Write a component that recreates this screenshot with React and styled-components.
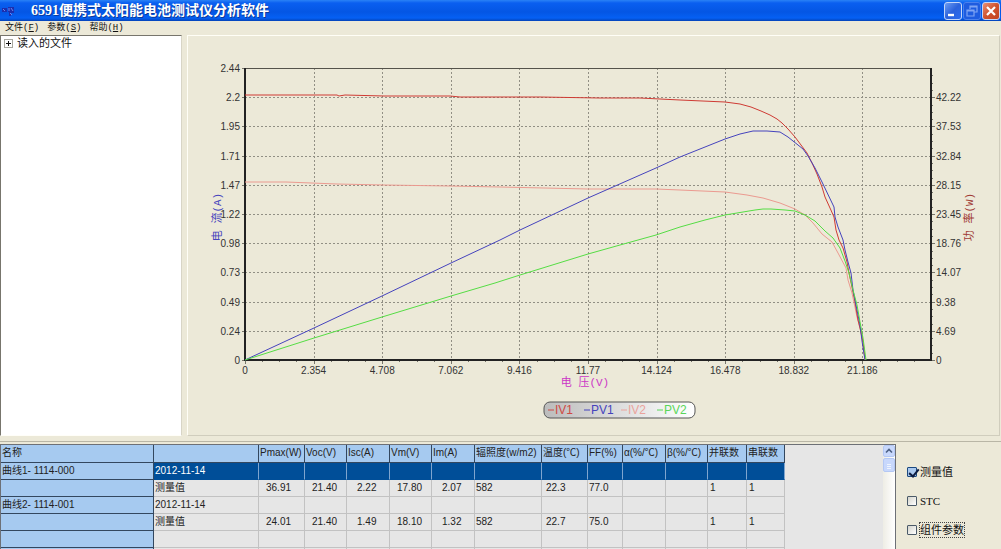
import React from "react";
import styled, { createGlobalStyle } from "styled-components";

const sans = '"Liberation Sans", "Noto Sans CJK SC", sans-serif';
const mono = '"Liberation Mono", "Noto Sans CJK SC", monospace';
const serif = '"Liberation Serif", "Noto Sans CJK SC", serif';

const GlobalStyle = createGlobalStyle`
  * { box-sizing: border-box; }
  body { margin: 0; background: #ece9d8; font-family: ${sans}; color: #222; overflow: hidden; }
  button { font: inherit; color: inherit; border: 0; background: none; padding: 0; }
`;

const Window = styled.div`
  display: flex;
  flex-direction: column;
  height: 100vh;
`;

const TitleBar = styled.header`
  display: flex;
  align-items: center;
  flex: none;
  height: 21px;
  padding: 0 1px 0 2px;
  background: linear-gradient(#2a82f6 0, #0a5ff0 3px, #0456e4 12px, #0560f4 18px, #0443b8 21px);
`;

const Title = styled.h1`
  flex: 1;
  margin: 0 0 0 16px;
  font: 700 14px/20px ${serif};
  color: #fff;
  text-shadow: 1px 1px 0 #0a3a9c;
  white-space: nowrap;
`;

const WindowButtons = styled.div`
  display: flex;
  gap: 1px;
`;

const WindowButton = styled.button`
  display: flex;
  width: 18px;
  height: 18px;
  border: 1px solid ${(p) => (p.$dim ? "#4a80ec" : "#c4d6f8")};
  border-radius: 3px;
  background: ${(p) =>
    p.$close
      ? "linear-gradient(135deg, #e89078, #d0532e 50%, #c2431f)"
      : p.$dim
      ? "#1e5ce0"
      : "linear-gradient(135deg, #6d9cf2, #2b62dc 50%, #2a6bf0)"};
  svg { width: 16px; height: 16px; }
`;

const MenuBar = styled.nav`
  display: flex;
  flex: none;
  gap: 8px;
  height: 14px;
  padding-left: 5px;
`;

const MenuItem = styled.button`
  font: 9px/13px ${mono};
  color: #111;
  white-space: nowrap;
`;

const Workspace = styled.main`
  display: flex;
  flex: none;
  gap: 5px;
  padding: 0 1px 5px 0;
  border-bottom: 1px solid #b9b6a6;
`;

const TreePanel = styled.aside`
  flex: none;
  width: 182px;
  border: 1px solid #fffef8;
  border-top-color: #77756c;
  border-left-color: #77756c;
  background: #fff;
  border-right-color: #d8d5c6;
`;

const TreeItem = styled.button`
  display: flex;
  align-items: center;
  gap: 4px;
  height: 14px;
  padding-left: 3px;
  font-size: 11px;
  line-height: 13px;
  color: #111;
  svg { width: 9px; height: 9px; }
`;

const ChartPanel = styled.section`
  flex: 1;
  min-width: 0;
  border: 1px solid #d0cdbd;
  border-top-color: #fffef6;
  border-left-color: #fffef6;
  svg { display: block; width: 100%; height: auto; }
`;

const TickText = styled.text`
  font: 10px ${sans};
  fill: #333;
  text-anchor: ${(p) => p.$anchor};
`;

const AxisTitle = styled.text`
  font: 11px ${mono};
  fill: ${(p) => p.$color};
  text-anchor: middle;
`;

const LegendText = styled.text`
  font: 12px ${sans};
  fill: ${(p) => p.$color};
`;

const Results = styled.section`
  display: flex;
  flex: 1;
  min-height: 0;
  padding-top: 2px;
`;

const GridArea = styled.div`
  display: flex;
  flex: 1;
  min-width: 0;
  overflow: hidden;
  border: 1px solid #6d7076;
  border-width: 1px 1px 0 1px;
  background: #e6e6e6;
`;

const GridScroll = styled.div`
  flex: 1;
  min-width: 0;
  overflow: hidden;
`;

const DataTable = styled.table`
  table-layout: fixed;
  width: 784px;
  border-collapse: separate;
  border-spacing: 0;
  font-size: 10px;
  line-height: 14px;
  white-space: nowrap;
  color: #222;
`;

const HeadCell = styled.th`
  height: 18px;
  padding: 0 0 2px 1px;
  overflow: hidden;
  border-right: 1px solid #33475f;
  border-bottom: 1px solid #33475f;
  background: #a6caf0;
  font-weight: 400;
  text-align: left;
`;

const NameCell = styled(HeadCell)`
  height: 17px;
  padding: 0 0 1px 1px;
`;

const Cell = styled.td`
  height: 17px;
  padding: 0 0 1px ${(p) => p.$indent || 1}px;
  border-right: 1px solid ${(p) => (p.$active ? "#7fa5cf" : "#c2c2c2")};
  border-bottom: 1px solid ${(p) => (p.$active ? "#004e98" : "#c2c2c2")};
  background: ${(p) => (p.$active ? "#004e98" : "#e6e6e6")};
  color: ${(p) => (p.$active ? "#fff" : "#222")};
`;

const ScrollBar = styled.div`
  display: flex;
  flex-direction: column;
  gap: 1px;
  flex: none;
  width: 12px;
  background: linear-gradient(90deg, #eeede5, #fff);
`;

const ScrollButton = styled.button`
  display: block;
  width: 12px;
  height: ${(p) => p.$size}px;
  border: 1px solid #b4c8f4;
  border-radius: 2px;
  background: #c8d8fc;
  svg { display: block; width: 10px; height: 10px; }
`;

const Options = styled.form`
  display: flex;
  flex-direction: column;
  align-items: flex-start;
  gap: 13px;
  flex: none;
  width: 105px;
  padding: 20px 0 0 11px;
`;

const Option = styled.label`
  display: flex;
  align-items: center;
  gap: 3px;
  height: 16px;
  font: 11px/14px ${serif};
  color: #111;
`;

const OptionText = styled.span`
  outline: ${(p) => (p.$focused ? "1px dotted #444" : "none")};
`;

const CheckBox = styled.input`
  position: relative;
  appearance: none;
  width: 10px;
  height: 10px;
  margin: 0;
  border: 1px solid #4b5a68;
  border-radius: 1px;
  background: linear-gradient(135deg, #d4d4cc, #fff);
  &:checked { background: #a9c8ee; border-color: #1c4a80; }
  &:checked::after {
    content: "";
    position: absolute;
    left: 3px;
    top: -1px;
    width: 4px;
    height: 8px;
    border: solid #0c1c40;
    border-width: 0 2px 2px 0;
    transform: rotate(40deg);
  }
`;

// Plot area, in chart units; the origin is its top left corner.
const PLOT_W = 686;
const PLOT_H = 292;
const currentTicks = ["2.44", "2.2", "1.95", "1.71", "1.47", "1.22", "0.98", "0.73", "0.49", "0.24", "0"];
const powerTicks = ["", "42.22", "37.53", "32.84", "28.15", "23.45", "18.76", "14.07", "9.38", "4.69", "0"];
const voltageTicks = ["0", "2.354", "4.708", "7.062", "9.416", "11.77", "14.124", "16.478", "18.832", "21.186"];

const curves = [
  { name: "IV2", color: "#eb9a90", points: "0,114 41,114 92,116 139,117 205,118 255,119 343,121 411,121 435,122 480,124 502,127 518,130 535,135 550,141 560,147 568,155 577,166 587,174 593,185 601,200 603,212 607,225 612,249 615,260 618,273 620,292" },
  { name: "IV1", color: "#cf3b34", points: "0,27 92,27 94,28 100,27 139,28 205,28 215,29 295,29 355,30 395,30 415,31 435,32 480,34 495,36 506,39 516,43 525,47 532,51 537,55 543,61 550,69 556,77 562,85 567,95 572,106 577,119 580,129 585,140 589,149 591,162 594,172 598,180 602,194 604,205 608,224 610,234 613,252 615,260 618,274 620,292" },
  { name: "PV1", color: "#4543bd", points: "0,292 69,260 137,228 206,195 255,172 275,162 343,130 411,100 435,89 460,79 480,71 495,66 508,63 522,63 535,64 543,69 553,77 558,81 563,88 570,100 577,114 589,139 590,149 593,159 598,172 600,182 603,194 606,205 608,222 611,237 615,257 617,273 620,292" },
  { name: "PV2", color: "#55dd44", points: "0,292 69,270 137,249 206,228 250,215 275,207 343,186 375,177 411,167 435,159 460,152 480,147 510,142 518,141 526,141 540,142 550,143 560,147 570,153 580,163 588,170 595,180 600,193 604,205 608,222 612,237 615,254 618,270 621,292" },
];

const legend = [
  { name: "IV1", color: "#cf4a44", x: 303 },
  { name: "PV1", color: "#4543bd", x: 339 },
  { name: "IV2", color: "#eba39c", x: 376 },
  { name: "PV2", color: "#5ad65a", x: 412 },
];

function Chart() {
  const row = (i) => (i * PLOT_H) / 10;
  const col = (i) => (i * PLOT_W) / 10;
  return (
    <svg viewBox="-57 -32 811 399" role="img" aria-label="IV / PV">
      <defs>
        <linearGradient id="legendFill">
          <stop offset="0" stopColor="#bcbcbc" />
          <stop offset="1" stopColor="#fff" />
        </linearGradient>
      </defs>
      <g stroke="#918f84" strokeDasharray="2 2">
        {currentTicks.slice(1, 10).map((t, i) => (
          <line key={t} x1="0" x2={PLOT_W} y1={Math.round(row(i + 1)) + 0.5} y2={Math.round(row(i + 1)) + 0.5} />
        ))}
        {voltageTicks.slice(1).map((t, i) => (
          <line key={t} y1="0" y2={PLOT_H} x1={Math.round(col(i + 1)) + 0.5} x2={Math.round(col(i + 1)) + 0.5} />
        ))}
      </g>
      <g stroke="#77756a">
        {Array.from({ length: 40 }, (_, i) => (
          <line key={i} x1={Math.round(col(i / 4)) + 0.5} x2={Math.round(col(i / 4)) + 0.5} y1={PLOT_H} y2={PLOT_H + (i % 4 ? 2 : 4)} />
        ))}
        {Array.from({ length: 40 }, (_, i) => (
          <line key={i} y1={Math.round(row((i + 1) / 4)) + 0.5} y2={Math.round(row((i + 1) / 4)) + 0.5} x1={PLOT_W} x2={PLOT_W + ((i + 1) % 4 ? 2 : 4)} />
        ))}
        {currentTicks.map((t, i) => (
          <line key={t} x1="-3" x2="0" y1={Math.round(row(i)) + 0.5} y2={Math.round(row(i)) + 0.5} />
        ))}
      </g>
      <line x1="0" x2={PLOT_W} y1="0.5" y2="0.5" stroke="#55534b" />
      <path d={`M0 0V${PLOT_H}H${PLOT_W}V0`} fill="none" stroke="#222" strokeWidth="2" />
      {curves.map((c) => (
        <polyline key={c.name} points={c.points} fill="none" stroke={c.color} strokeWidth="1" />
      ))}
      {currentTicks.map((t, i) => (
        <TickText key={t} $anchor="end" x="-5" y={row(i) + 4}>{t}</TickText>
      ))}
      {powerTicks.map((t, i) => (
        <TickText key={i} $anchor="start" x={PLOT_W + 5} y={row(i) + 4}>{t}</TickText>
      ))}
      {voltageTicks.map((t, i) => (
        <TickText key={t} $anchor="middle" x={col(i)} y={PLOT_H + 14}>{t}</TickText>
      ))}
      <AxisTitle $color="#cb35c6" x="340" y="318">电 压(V)</AxisTitle>
      <AxisTitle $color="#4543bd" transform="translate(-24 149) rotate(-90)">电 流(A)</AxisTitle>
      <AxisTitle $color="#a03a34" transform={`translate(${PLOT_W + 42} 149) rotate(-90)`}>功 率(W)</AxisTitle>
      <rect x="299" y="334" width="151" height="16" rx="6" fill="url(#legendFill)" stroke="#555" />
      {legend.map((l) => (
        <g key={l.name}>
          <line x1={l.x} x2={l.x + 6} y1="342" y2="342" stroke={l.color} />
          <LegendText $color={l.color} x={l.x + 7} y="346">{l.name}</LegendText>
        </g>
      ))}
    </svg>
  );
}

const columns = [
  { title: "名称", width: 153 },
  { title: "", width: 105 },
  { title: "Pmax(W)", width: 46, indent: 7 },
  { title: "Voc(V)", width: 42, indent: 7 },
  { title: "Isc(A)", width: 43, indent: 10 },
  { title: "Vm(V)", width: 42, indent: 7 },
  { title: "Im(A)", width: 43, indent: 10 },
  { title: "辐照度(w/m2)", width: 67 },
  { title: "温度(℃)", width: 46, indent: 4 },
  { title: "FF(%)", width: 35 },
  { title: "α(%/℃)", width: 43 },
  { title: "β(%/℃)", width: 42 },
  { title: "并联数", width: 39, indent: 2 },
  { title: "串联数", width: 38, indent: 2 },
];

const blank = Array(12).fill("");
const rows = [
  { name: "曲线1- 1114-000", active: true, cells: ["2012-11-14", ...blank] },
  { name: "", cells: ["测量值", "36.91", "21.40", "2.22", "17.80", "2.07", "582", "22.3", "77.0", "", "", "1", "1"] },
  { name: "曲线2- 1114-001", cells: ["2012-11-14", ...blank] },
  { name: "", cells: ["测量值", "24.01", "21.40", "1.49", "18.10", "1.32", "582", "22.7", "75.0", "", "", "1", "1"] },
  { name: "", cells: ["", ...blank] },
  { name: "", cells: ["", ...blank] },
];

function ResultTable() {
  return (
    <DataTable>
      <colgroup>
        {columns.map((c, i) => <col key={i} width={c.width} />)}
      </colgroup>
      <thead>
        <tr>{columns.map((c, i) => <HeadCell key={i} scope="col">{c.title}</HeadCell>)}</tr>
      </thead>
      <tbody>
        {rows.map((r, i) => (
          <tr key={i}>
            <NameCell scope="row">{r.name}</NameCell>
            {r.cells.map((v, j) => (
              <Cell key={j} $active={r.active} $indent={columns[j + 1].indent}>{v}</Cell>
            ))}
          </tr>
        ))}
      </tbody>
    </DataTable>
  );
}

export default function App() {
  return (
    <Window>
      <GlobalStyle />
      <TitleBar>
        <svg width="13" height="16" viewBox="0 0 13 16" aria-hidden="true">
          <path d="M0 5h5v4H0zM6 4h6v6H9v3H7V9H6z" fill="#1c2fae" />
          <path d="M1 6l2 2M7 5v3M9 5l2 3M8 10l2 2" stroke="#6c86ee" fill="none" />
        </svg>
        <Title>6591便携式太阳能电池测试仪分析软件</Title>
        <WindowButtons>
          <WindowButton aria-label="最小化">
            <svg viewBox="0 0 16 16"><path d="M3 12h6" stroke="#fff" strokeWidth="2.4" /></svg>
          </WindowButton>
          <WindowButton $dim aria-label="还原">
            <svg viewBox="0 0 16 16" fill="none" stroke="#7ea4f4" strokeWidth="1.2">
              <path d="M6 6V3h7v6h-3M6 4h7M3 7h7v6H3zM3 8h7" />
            </svg>
          </WindowButton>
          <WindowButton $close aria-label="关闭">
            <svg viewBox="0 0 16 16"><path d="M4 4l8 8M12 4l-8 8" stroke="#fff" strokeWidth="2.2" /></svg>
          </WindowButton>
        </WindowButtons>
      </TitleBar>
      <MenuBar>
        <MenuItem>文件(<u>F</u>)</MenuItem>
        <MenuItem>参数(<u>S</u>)</MenuItem>
        <MenuItem>帮助(<u>H</u>)</MenuItem>
      </MenuBar>
      <Workspace>
        <TreePanel>
          <TreeItem aria-expanded="false">
            <svg viewBox="0 0 9 9" fill="none">
              <rect x="0.5" y="0.5" width="8" height="8" stroke="#a8a8a0" />
              <path d="M2 4.5h5M4.5 2v5" stroke="#111" />
            </svg>
            读入的文件
          </TreeItem>
        </TreePanel>
        <ChartPanel>
          <Chart />
        </ChartPanel>
      </Workspace>
      <Results>
        <GridArea>
          <GridScroll>
            <ResultTable />
          </GridScroll>
          <ScrollBar>
            <ScrollButton $size={12} aria-label="向上滚动">
              <svg viewBox="0 0 10 10"><path d="M2 6.5l3-3 3 3" fill="none" stroke="#4d6185" strokeWidth="1.6" /></svg>
            </ScrollButton>
            <ScrollButton $size={14} aria-label="滚动条">
              <svg viewBox="0 0 10 10"><path d="M3 4.5h4M3 6.5h4M3 8.5h4" stroke="#eef4fe" /></svg>
            </ScrollButton>
          </ScrollBar>
        </GridArea>
        <Options>
          <Option>
            <CheckBox type="checkbox" defaultChecked />
            <OptionText>测量值</OptionText>
          </Option>
          <Option>
            <CheckBox type="checkbox" />
            <OptionText>STC</OptionText>
          </Option>
          <Option>
            <CheckBox type="checkbox" />
            <OptionText $focused>组件参数</OptionText>
          </Option>
        </Options>
      </Results>
    </Window>
  );
}
